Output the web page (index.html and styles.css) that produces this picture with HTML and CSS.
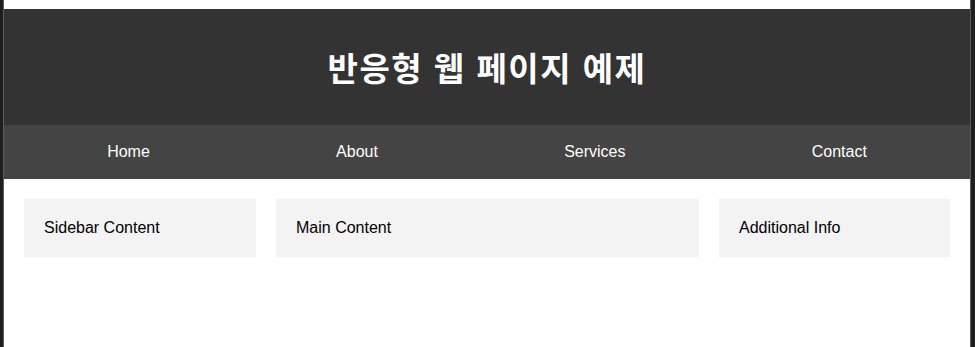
FILE: index.html
```html
<!DOCTYPE html>
<html lang="ko">
<head>
<meta charset="utf-8">
<title>반응형 웹 페이지 예제</title>
<link rel="stylesheet" href="styles.css">
</head>
<body>
<div class="page">
  <header class="site-header">
    <h1 class="title">반응형 웹 페이지 예제</h1>
  </header>
  <nav class="site-nav">
    <a class="nav-link" href="#">Home</a>
    <a class="nav-link" href="#">About</a>
    <a class="nav-link" href="#">Services</a>
    <a class="nav-link" href="#">Contact</a>
  </nav>
  <main class="content">
    <aside class="box">Sidebar Content</aside>
    <section class="box">Main Content</section>
    <aside class="box">Additional Info</aside>
  </main>
</div>
</body>
</html>
```
FILE: styles.css
```css
html, body {
  margin: 0;
  height: 100%;
}
body {
  background: #1f1f1f;
  padding: 0 4px 0 3px;
  font-family: "Liberation Sans", Arial, sans-serif;
  font-size: 16px;
  color: #000;
}
.page {
  background: #fff;
  border-left: 1px solid #5c5c5c;
  border-right: 1px solid #5c5c5c;
  min-height: 100%;
  padding-top: 9px;
  box-sizing: border-box;
}
.site-header {
  background: #333;
  height: 116px;
  display: flex;
  align-items: center;
  justify-content: center;
}
.title {
  margin: 0;
  color: #fff;
  font-family: "Noto Sans CJK KR", "Noto Sans", sans-serif;
  font-weight: 700;
  font-size: 33px;
  letter-spacing: 1.5px;
  line-height: 1;
}
.site-nav {
  background: #444;
  height: 54px;
  padding: 0 10px;
  display: flex;
  align-items: center;
  justify-content: space-around;
}
.nav-link {
  color: #fff;
  text-decoration: none;
  font-size: 16px;
}
.content {
  display: grid;
  grid-template-columns: 232fr 423fr 231fr;
  gap: 20px;
  padding: 20px;
}
.box {
  background: #f3f3f3;
  padding: 20px;
  line-height: 18px;
}
```
